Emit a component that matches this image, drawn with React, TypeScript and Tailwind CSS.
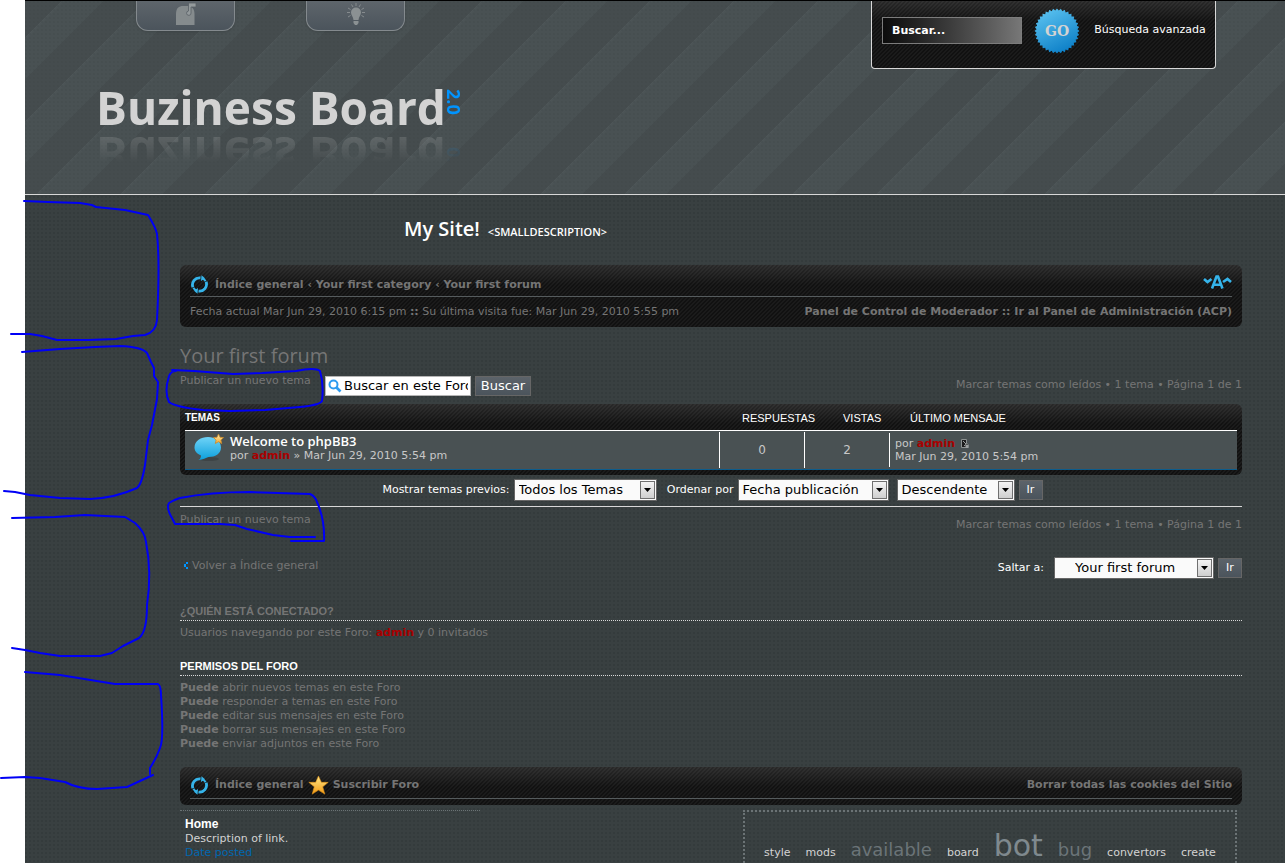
import React, { useState } from 'react';
import clsx from 'clsx';

const pageBg =
  'bg-[#394041] bg-[radial-gradient(circle_at_1px_1px,#343b3c_1px,transparent_1px)] bg-[size:4px_4px]';
const headerBg =
  'bg-[radial-gradient(circle_at_1px_1px,#3d454740_1px,transparent_1px),linear-gradient(135deg,#4d5557_0%,#495153_2%,#495153_25%,#454c4e_25%,#454c4e_50%,#4d5557_50%,#495153_52%,#495153_75%,#454c4e_75%)] bg-[size:4px_4px,84px_84px] bg-[position:0_0,37px_0]';
const carbonBg =
  'bg-[linear-gradient(to_bottom,#ffffff1a,#ffffff00_20px),linear-gradient(135deg,#111_25%,#1b1b1b_25%,#1b1b1b_50%,#111_50%,#111_75%,#1b1b1b_75%)] bg-[size:auto,4px_4px]';

const RefreshIcon: React.FC = () => (
  <svg width="19" height="19" viewBox="0 0 19 19" fill="none" stroke="#35b4ea" strokeWidth="2.8" aria-hidden="true">
    <path d="M2.900 12.200A7 7 0 0 1 10.500 2.900" />
    <path d="M16.100 6.800A7 7 0 0 1 8.500 16.100" />
    <path d="M12.500 3.400Q14.500 4.300 15.600 6.200" strokeWidth="2" />
    <path d="M6.500 15.600Q4.500 14.700 3.400 12.800" strokeWidth="2" />
    <path d="M11.500 0.300L15 3.300L11 6Z" fill="#35b4ea" stroke="none" />
    <path d="M7.500 18.700L4 15.700L8 13Z" fill="#35b4ea" stroke="none" />
  </svg>
);

const FontSizeIcon: React.FC = () => (
  <svg width="29" height="14" viewBox="0 0 29 14" fill="none" stroke="#35b4ea" strokeWidth="2.6" aria-hidden="true">
    <path d="M1 4L4.500 7L8.500 4" />
    <path d="M9 13.500L13.500 1.500H15L19.500 13.500M11 9.800H18" />
    <path d="M20 7L24.500 4L28 7" />
  </svg>
);

const StarIcon: React.FC<{ size: number }> = ({ size }) => (
  <svg width={size} height={size} viewBox="0 0 20 20" aria-hidden="true">
    <defs>
      <linearGradient id="star" x1="0" y1="0" x2="0" y2="1">
        <stop offset="0" stopColor="#ffe88a" />
        <stop offset="1" stopColor="#f39a12" />
      </linearGradient>
    </defs>
    <path d="M10 1L12.7 7H19.2L14 11.3L16 18.2L10 14.4L4 18.2L6 11.3L0.8 7H7.3Z" fill="url(#star)" stroke="#e0921a" strokeWidth="0.6" />
  </svg>
);

const TopicIcon: React.FC = () => (
  <svg width="32" height="30" viewBox="0 0 32 30" aria-hidden="true">
    <defs>
      <linearGradient id="bubble" x1="0" y1="0" x2="0" y2="1">
        <stop offset="0" stopColor="#6fd3f7" />
        <stop offset="1" stopColor="#0c9fdc" />
      </linearGradient>
      <linearGradient id="bubbleStar" x1="0" y1="0" x2="0" y2="1">
        <stop offset="0" stopColor="#fff0b0" />
        <stop offset="1" stopColor="#f3a530" />
      </linearGradient>
    </defs>
    <ellipse cx="16" cy="26" rx="10" ry="2" fill="#000" opacity="0.15" />
    <path d="M15 4C22 4 28 8 28 14.5C28 21 22 24 15.500 24C13 24.500 10 27 5.500 27C7 26 8 24.500 8 22.500C4 21 1.500 18 1.500 14.500C1.500 8 8 4 15 4Z" fill="url(#bubble)" />
    <path d="M25.500 1L27 4.300L30.500 4.600L27.900 7L28.700 10.500L25.500 8.700L22.300 10.500L23.100 7L20.500 4.600L24 4.300Z" fill="url(#bubbleStar)" stroke="#c98a2c" strokeWidth="0.8" />
  </svg>
);

const LastPostIcon: React.FC = () => (
  <svg width="8" height="9" viewBox="0 0 8 9" className="ml-0.5 inline-block" aria-hidden="true">
    <path d="M0.500 0.500H5.500V4L7 5.500V8.500H0.500Z" fill="#1c1c1c" stroke="#8d9292" />
    <path d="M2 2L5 5M3 7L6 4.500" stroke="#9da1a1" />
    <path d="M4.500 6H7.500V9H4.500Z" fill="#9da1a1" />
  </svg>
);

const MailboxIcon: React.FC = () => (
  <svg width="22" height="23" viewBox="0 0 22 23" aria-hidden="true">
    <path d="M1 23V12C1 6 4 4 8 4H13C17 4 19.500 7 19.500 12V23Z" fill="#858b8d" />
    <path d="M13.500 1H21V5H16V11A2.200 2.200 0 1 1 13.500 9Z" fill="#949a9c" stroke="#596066" strokeWidth="0.800" />
  </svg>
);

const BulbIcon: React.FC = () => (
  <svg width="20" height="23" viewBox="0 0 20 23" fill="#8b9193" aria-hidden="true">
    <path d="M10 5.500A5 5 0 0 1 15 10.500C15 13 12.800 14.500 12.500 18H7.500C7.200 14.500 5 13 5 10.500A5 5 0 0 1 10 5.500Z" />
    <path d="M7.500 19H12.500V21L11 23H9L7.500 21Z" />
    <path d="M10 1V4M5.500 2.500L7 5M14.500 2.500L13 5M2 6L4.500 7.500M18 6L15.500 7.500M1 10.500H4M19 10.500H16M2 15L4.500 13.500M18 15L15.500 13.500" stroke="#8b9193" strokeWidth="0.9" />
  </svg>
);

const badgePoints = Array.from({ length: 72 }, (_, i) => {
  const r = i % 2 === 0 ? 22.5 : 20.5;
  const a = (i * Math.PI) / 36;
  return `${23 + r * Math.cos(a)},${23 + r * Math.sin(a)}`;
}).join(' ');

const TopTab: React.FC<{ label: string; children: React.ReactNode }> = ({ label, children }) => (
  <a
    href="#"
    aria-label={label}
    className="flex h-[30px] w-[99px] justify-center rounded-b-xl border border-t-0 border-[#848a8e] bg-linear-to-b from-[#5e656b] to-[#4b545c] pt-px shadow"
  >
    {children}
  </a>
);

type DropDownProps = {
  id: string;
  options: string[];
  className: string;
  padding?: string;
};

const DropDown: React.FC<DropDownProps> = ({ id, options, className, padding = 'pl-1' }) => {
  const [value, setValue] = useState(options[0]);
  return (
    <span className={clsx('relative inline-flex', className)}>
      <select
        id={id}
        value={value}
        onChange={(e) => setValue(e.target.value)}
        className={clsx('h-[22px] w-full appearance-none border border-[#666] bg-[#fafafa] pr-5 text-[13px] leading-5 text-black', padding)}
      >
        {options.map((o) => (
          <option key={o}>{o}</option>
        ))}
      </select>
      <span className="pointer-events-none absolute inset-y-0.5 right-0.5 flex w-[15px] items-center justify-center border border-[#707070] bg-linear-to-b from-[#f4f4f4] to-[#cfcfcf]">
        <svg width="7" height="4" viewBox="0 0 7 4" aria-hidden="true">
          <path d="M0 0H7L3.500 4Z" fill="#000" />
        </svg>
      </span>
    </span>
  );
};

const SmallButton: React.FC<{ children: React.ReactNode; className?: string }> = ({ children, className }) => (
  <button
    type="button"
    className={clsx('flex h-5 items-center justify-center border border-[#666] bg-linear-to-b from-[#5c636a] to-[#4b545c] text-white', className)}
  >
    {children}
  </button>
);

const Admin: React.FC = () => (
  <a href="#" className="font-bold text-[#a90000]">admin</a>
);

const TopicActions: React.FC = () => (
  <p className="text-right">
    <a href="#">Marcar temas como leídos</a> • 1 tema • Página <b className="font-normal">1</b> de <b className="font-normal">1</b>
  </p>
);

const permissions = [
  'abrir nuevos temas en este Foro',
  'responder a temas en este Foro',
  'editar sus mensajes en este Foro',
  'borrar sus mensajes en este Foro',
  'enviar adjuntos en este Foro',
];

const tags = [
  { name: 'style', style: 'text-[11px] text-[#d3d3d3]' },
  { name: 'mods', style: 'text-[11px] text-[#d3d3d3]' },
  { name: 'available', style: 'text-lg leading-none text-[#6b7478]' },
  { name: 'board', style: 'text-[11px] text-[#d3d3d3]' },
  { name: 'bot', style: 'text-[30px] leading-none text-[#7f898e]' },
  { name: 'bug', style: 'text-lg leading-none text-[#6b7478]' },
  { name: 'convertors', style: 'text-[11px] text-[#d3d3d3]' },
  { name: 'create', style: 'text-[11px] text-[#d3d3d3]' },
];

// freehand marker strokes
const strokes = [
  'M24 201L48 202L80 203L92 205L96 207L125 210L148 215Q156 228 157 234Q160 262 157 320Q156 332 145 335L133 336L116 339L88 340L57 340L42 336L30 334L11 334',
  'M22 352L60 349L95 347L120 346Q142 347 147 353L151 362L154 368L154 376L158 382L157 399L152 425L148 440L145 465Q142 484 137 488Q115 498 90 499L60 498L30 495L15 492L4 491',
  'M12 518L55 517L85 515L125 517L135 523Q145 532 146 542Q152 573 147 605Q147 632 139 638L123 646L112 653L100 656L60 656L40 653L25 650L12 648',
  'M25 672L60 675L115 684H158Q161 686 161 695Q164 740 160 748Q157 757 150 768V774M153 775L140 781L127 787L97 789Q78 789 65 782L40 778L25 777L1 778',
  'M172 370L194 371L233 374L262 373L296 371Q315 367 320 371Q324 384 322 401Q320 405 300 407L265 410L230 411L203 410Q175 407 169 402Q164 392 169 376Q171 371 176 371',
  'M315 537L290 537L273 535L247 529L235 525L220 524H175L172 518Q166 508 169 503Q176 499 180 498Q210 492 250 492L310 494Q315 496 317 502Q325 520 324 541L291 541',
];

const App: React.FC = () => {
  const [query, setQuery] = useState('Buscar...');
  const [forumQuery, setForumQuery] = useState('Buscar en este Foro');

  return (
    <div className="relative bg-white pl-[25px] font-['DejaVu_Sans',Verdana,sans-serif] text-[11px] leading-[14px]">
      <div className={clsx('flex min-h-screen flex-col text-[#757575]', pageBg)}>
        <header className={clsx('flex h-[195px] items-start justify-between border-t border-b border-t-black border-b-[#d8d8d8] pr-[69px] pl-[71px]', headerBg)}>
          <div>
            <nav className="flex gap-[71px] pl-10">
              <TopTab label="Correo"><MailboxIcon /></TopTab>
              <TopTab label="Ideas"><BulbIcon /></TopTab>
            </nav>
            <a
              href="#"
              className="mt-11 flex h-16 items-start font-['Open_Sans',sans-serif] font-bold text-[#d3d3d3] [-webkit-box-reflect:below_-16px_linear-gradient(to_bottom,transparent_38%,rgba(255,255,255,0.18)_80%)]"
            >
              <span className="text-[46px] leading-[64px] whitespace-nowrap">Buziness Board</span>
              <span className="mt-3.5 text-lg leading-4 text-[#0094ff] [writing-mode:vertical-rl]">2.0</span>
            </a>
          </div>
          <form className={clsx('flex h-[68px] items-start rounded-b border border-t-0 border-[#d8d8d8] pr-[7px] pl-2.5 text-white', carbonBg)}>
            <input
              aria-label="Buscar"
              value={query}
              onChange={(e) => setQuery(e.target.value)}
              className="mt-4 h-[27px] w-[140px] border border-[#7c7c7c] bg-linear-to-r from-[#0c0c0c] to-[#777] pl-[9px] font-bold"
            />
            <button type="button" className="mt-[7px] ml-3 grid size-[46px] place-items-center">
              <svg className="col-start-1 row-start-1" width="46" height="46" viewBox="0 0 46 46" aria-hidden="true">
                <defs>
                  <linearGradient id="badge" x1="0.2" y1="0" x2="0.7" y2="1">
                    <stop offset="0" stopColor="#5cc3f0" />
                    <stop offset="1" stopColor="#0a7dc6" />
                  </linearGradient>
                </defs>
                <polygon points={badgePoints} fill="url(#badge)" />
              </svg>
              <span className="z-10 col-start-1 row-start-1 font-['DejaVu_Serif',serif] text-sm font-bold text-[#d3d3d3]">GO</span>
            </button>
            <a href="#" className="mt-[22px] ml-3 w-[116px] text-center">Búsqueda avanzada</a>
          </form>
        </header>

        <main className="flex grow flex-col pr-[43px] pl-[155px]">
          <h1 className="flex h-[70px] items-baseline gap-2 pt-5 pl-56 font-['Open_Sans',sans-serif] text-xl leading-7 font-semibold text-white">
            My Site! <small className="text-[11px]">&lt;SMALLDESCRIPTION&gt;</small>
          </h1>

          <nav className={clsx('rounded-md px-2.5 py-2', carbonBg)}>
            <div className="flex h-6 items-center border-b border-[#555b5d] font-bold">
              <RefreshIcon />
              <p className="ml-1.5">
                <a href="#">Índice general</a> ‹ <a href="#">Your first category</a> ‹ <a href="#">Your first forum</a>
              </p>
              <a href="#" aria-label="Cambiar tamaño de fuente" className="ml-auto pb-1.5"><FontSizeIcon /></a>
            </div>
            <div className="flex justify-between pt-2">
              <p>Fecha actual Mar Jun 29, 2010 6:15 pm <b>::</b> Su última visita fue: Mar Jun 29, 2010 5:55 pm</p>
              <p className="font-bold">
                <a href="#">Panel de Control de Moderador</a> :: <a href="#">Ir al Panel de Administración (ACP)</a>
              </p>
            </div>
          </nav>

          <h2 className="mt-[15px] font-['Open_Sans',sans-serif] text-xl leading-7">
            <a href="#">Your first forum</a>
          </h2>
          <div className="flex h-[34px] items-start pt-1">
            <a href="#" className="w-[145px]">Publicar un nuevo tema</a>
            <form className="mt-0.5 flex gap-1 text-[13px]">
              <label className="flex h-5 w-[146px] items-center gap-0.5 border border-[#b5b5b5] bg-white px-0.5 text-black">
                <svg className="shrink-0" width="14" height="14" viewBox="0 0 14 14" fill="none" stroke="#2d9bf0" aria-hidden="true">
                  <circle cx="5.500" cy="5.500" r="4" strokeWidth="2" />
                  <path d="M8.500 8.500L12.500 12.500" strokeWidth="2.600" />
                </svg>
                <input
                  aria-label="Buscar en este Foro"
                  value={forumQuery}
                  onChange={(e) => setForumQuery(e.target.value)}
                  className="min-w-0 grow"
                />
              </label>
              <SmallButton className="w-14">Buscar</SmallButton>
            </form>
            <div className="mt-1 ml-auto"><TopicActions /></div>
          </div>

          <div className={clsx('rounded-md px-[5px] pb-[5px]', carbonBg)}>
            <table className="w-full table-fixed border-collapse text-left text-[#c8c8c8]">
              <thead className="font-['Liberation_Sans',Arial,sans-serif] text-white">
                <tr className="h-[26px] border-b border-white">
                  <th className="pt-0.5 text-[10px] font-bold">TEMAS</th>
                  <th className="w-[85px] pt-0.5 pl-[23px] font-normal whitespace-nowrap">RESPUESTAS</th>
                  <th className="w-[85px] pt-0.5 pl-[39px] font-normal">VISTAS</th>
                  <th className="w-[348px] pt-0.5 pl-[21px] font-normal">ÚLTIMO MENSAJE</th>
                </tr>
              </thead>
              <tbody>
                <tr className="h-[39px] border-b border-[#0c5c8c] bg-[#495153]">
                  <td className="align-top">
                    <div className="flex gap-[5px] pt-0.5 pl-2">
                      <TopicIcon />
                      <div>
                        <a href="#" className="block font-['Open_Sans',sans-serif] text-[13px] leading-4 font-semibold text-white">Welcome to phpBB3</a>
                        <p>por <Admin /> » Mar Jun 29, 2010 5:54 pm</p>
                      </div>
                    </div>
                  </td>
                  <td className="text-center text-xs">
                    <div className="border-l border-white py-2.5">0</div>
                  </td>
                  <td className="text-center text-xs">
                    <div className="border-l border-white py-2.5">2</div>
                  </td>
                  <td>
                    <div className="border-l border-white py-1 pl-[5px] leading-[13px]">
                      <p>por <Admin /> <a href="#" aria-label="Ver último mensaje"><LastPostIcon /></a></p>
                      <p>Mar Jun 29, 2010 5:54 pm</p>
                    </div>
                  </td>
                </tr>
              </tbody>
            </table>
          </div>

          <form className="flex h-8 items-center justify-center border-b border-[#d8d8d8] pr-1 text-white">
            <label htmlFor="period" className="mr-1 w-[134px] text-right">Mostrar temas previos:</label>
            <DropDown id="period" className="mr-1.5 w-[143px]" options={['Todos los Temas', '1 día', '7 días']} />
            <label htmlFor="sort" className="mr-1 w-[71px] text-right">Ordenar por</label>
            <DropDown id="sort" className="mr-2 w-[151px]" options={['Fecha publicación', 'Autor', 'Respuestas']} />
            <DropDown id="direction" className="mr-1 w-[118px]" options={['Descendente', 'Ascendente']} />
            <SmallButton className="w-6">Ir</SmallButton>
          </form>

          <div className="flex items-start justify-between pt-1.5">
            <a href="#">Publicar un nuevo tema</a>
            <div className="pt-[5px]"><TopicActions /></div>
          </div>

          <div className="mt-[25px] flex items-start">
            <a href="#" className="mt-0.5 flex items-center gap-1 pl-[3px]">
              <svg width="5" height="7" viewBox="0 0 5 7" aria-hidden="true">
                <path d="M3 0H5V2H3ZM1 2H3V5H1ZM3 5H5V7H3Z" fill="#0094ff" />
              </svg>
              Volver a Índice general
            </a>
            <form className="ml-auto flex items-center gap-1 text-white">
              <label htmlFor="jump" className="mr-1.5">Saltar a:</label>
              <DropDown id="jump" className="w-[160px]" padding="pl-5" options={['Your first forum', 'Your first category']} />
              <SmallButton className="w-6">Ir</SmallButton>
            </form>
          </div>

          <h3 className="mt-[25px] border-b border-dotted border-[#d8d8d8] pb-0.5 font-['Liberation_Sans',Arial,sans-serif] font-bold">
            <a href="#">¿QUIÉN ESTÁ CONECTADO?</a>
          </h3>
          <p className="mt-[5px]">Usuarios navegando por este Foro: <Admin /> y 0 invitados</p>

          <h3 className="mt-[19px] border-b border-dotted border-[#d8d8d8] pb-0.5 font-['Liberation_Sans',Arial,sans-serif] font-bold text-white">
            PERMISOS DEL FORO
          </h3>
          <ul className="mt-[5px]">
            {permissions.map((p) => (
              <li key={p}><strong>Puede</strong> {p}</li>
            ))}
          </ul>

          <nav className={clsx('mt-4 rounded-md px-2.5 py-1.5', carbonBg)}>
            <div className="flex h-[26px] items-center border-b border-[#555b5d] font-bold">
              <RefreshIcon />
              <a href="#" className="mr-1 ml-1.5">Índice general</a>
              <StarIcon size={21} />
              <a href="#" className="ml-1">Suscribir Foro</a>
              <a href="#" className="ml-auto">Borrar todas las cookies del Sitio</a>
            </div>
          </nav>

          <footer className="mt-[5px] flex grow justify-between pr-[5px]">
            <div className="w-[300px] border-t border-dotted border-[#6b7375] pt-[5px] pl-[5px]">
              <a href="#" className="font-['Liberation_Sans',Arial,sans-serif] text-xs font-bold text-white">Home</a>
              <p className="text-[#d3d3d3]">Description of link.</p>
              <p className="text-[#0067b0]">Date posted</p>
            </div>
            <div className="flex w-[494px] items-baseline justify-center gap-[15px] border-2 border-b-0 border-dotted border-[#6b7375] pt-[19px]">
              {tags.map((t) => (
                <a key={t.name} href="#" className={t.style}>{t.name}</a>
              ))}
            </div>
          </footer>
        </main>
      </div>

      <svg className="pointer-events-none absolute top-0 left-0" width="330" height="800" viewBox="0 0 330 800" fill="none" stroke="#0000f5" strokeWidth="2" strokeLinecap="round" strokeLinejoin="round" aria-hidden="true">
        {strokes.map((d) => (
          <path key={d} d={d} />
        ))}
      </svg>
    </div>
  );
};

export default App;
